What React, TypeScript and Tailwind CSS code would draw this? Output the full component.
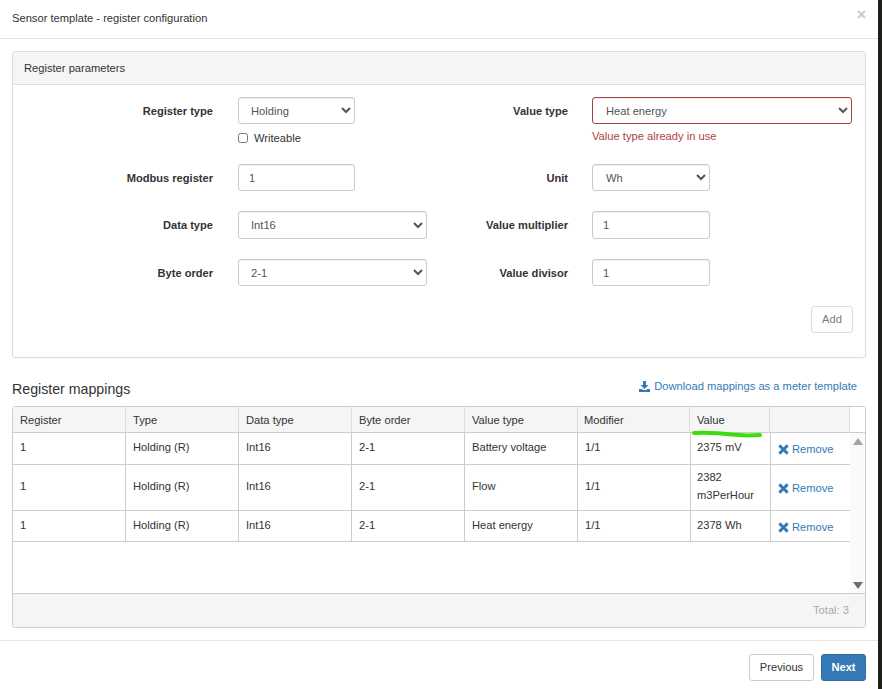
import React from "react";

const label = "flex items-center justify-end pr-[1px] text-right font-bold text-[#333] text-[11.1px] leading-[18px]";
const ctl = "block rounded-[3px] border bg-white pr-0 text-[11.17px] text-[#555] shadow-[inset_0_1px_1px_rgba(0,0,0,0.075)]";
const inputCls = "block rounded-[3px] border border-[#ccc] bg-white px-[10px] text-[11.17px] text-[#555] shadow-[inset_0_1px_1px_rgba(0,0,0,0.075)]";

function Sel({ v, w, tall, err, right }: { v: string; w: string; tall?: boolean; err?: boolean; right?: boolean }) {
  return (
    <select
      defaultValue={v}
      className={`${ctl} ${w} ${tall ? "h-[28px]" : "h-[27px]"} ${err ? "border-[#a94442]" : "border-[#ccc]"} ${right ? "pl-[9px]" : "pl-[8px]"}`}
    >
      <option>{v}</option>
    </select>
  );
}

function Inp({ v, w, tall }: { v: string; w: string; tall?: boolean }) {
  return <input readOnly value={v} className={`${inputCls} ${w} ${tall ? "h-[28px]" : "h-[27px]"}`} />;
}

const headCols = ["Register", "Type", "Data type", "Byte order", "Value type", "Modifier", "Value", ""];
const rows = [
  { vt: "Battery voltage", val: "2375 mV", h: "h-[32px]", pb: "pb-[4px]" },
  { vt: "Flow", val: "2382 m3PerHour", h: "h-[46px]", pb: "pb-[4px]" },
  { vt: "Heat energy", val: "2378 Wh", h: "h-[31px]", pb: "pb-[2px]" },
];

function XIcon() {
  return (
    <svg width="11" height="11" viewBox="0 0 10 10" className="shrink-0">
      <path d="M2.2 0.3 5 3.1 7.8 0.3 9.7 2.2 6.9 5 9.7 7.8 7.8 9.7 5 6.9 2.2 9.7 0.3 7.8 3.1 5 0.3 2.2Z" fill="#337ab7" />
    </svg>
  );
}

export default function App() {
  return (
    <div className="relative flex h-[689px] w-[882px] overflow-hidden bg-[#1f1f1a] font-['Liberation_Sans',Arial,sans-serif] text-[11.17px] text-[#333]">
      <div className="flex h-full w-[878px] flex-col bg-white">
        {/* header */}
        <div className="relative flex h-[39px] shrink-0 items-center border-b border-[#e5e5e5] pl-[12px] pb-[3px]">
          <span className="leading-[18px]">Sensor template - register configuration</span>
          <span className="absolute right-[12px] top-[6px] text-[16px] font-bold leading-[18px] text-[#c8c8c8]">×</span>
        </div>

        <div className="flex flex-1 flex-col px-[12px]">
          {/* panel */}
          <div className="mt-[12px] h-[307px] rounded-[3px] border border-[#ddd] shadow-[0_1px_1px_rgba(0,0,0,0.05)]">
            <div className="flex h-[33px] items-center border-b border-[#ddd] bg-[#f5f5f5] pl-[11px]">Register parameters</div>
            <div className="relative pt-[12px]">
              <div className="grid grid-cols-[200px_189px_118px_260px] gap-x-[24px] pl-[1px]">
                <div className={`${label} h-[27px]`}>Register type</div>
                <div>
                  <Sel v="Holding" w="w-[117px]" />
                  <label className="mt-[7px] flex h-[14px] items-center gap-[6px] text-[#333]">
                    <input type="checkbox" className="m-0 h-[10px] w-[10px]" />
                    Writeable
                  </label>
                </div>
                <div className={`${label} h-[27px]`}>Value type</div>
                <div className="-ml-[1px]">
                  <Sel v="Heat energy" w="w-[260px]" err right />
                  <div className="mt-[3px] leading-[18px] text-[#a94442]">Value type already in use</div>
                </div>

                <div className={`${label} mt-[19px] h-[27px]`}>Modbus register</div>
                <div className="mt-[19px]"><Inp v="1" w="w-[117px]" /></div>
                <div className={`${label} mt-[19px] h-[27px]`}>Unit</div>
                <div className="-ml-[1px] mt-[19px]"><Sel v="Wh" w="w-[118px]" right /></div>

                <div className={`${label} mt-[20px] h-[28px]`}>Data type</div>
                <div className="mt-[20px]"><Sel v="Int16" w="w-[189px]" tall /></div>
                <div className={`${label} mt-[20px] h-[28px]`}>Value multiplier</div>
                <div className="-ml-[1px] mt-[20px]"><Inp v="1" w="w-[118px]" tall /></div>

                <div className={`${label} mt-[20px] h-[27px]`}>Byte order</div>
                <div className="mt-[20px]"><Sel v="2-1" w="w-[189px]" /></div>
                <div className={`${label} mt-[20px] h-[27px]`}>Value divisor</div>
                <div className="-ml-[1px] mt-[20px]"><Inp v="1" w="w-[118px]" /></div>
              </div>
              <div className="mt-[20px] flex justify-end pr-[12px]">
                <button className="h-[27px] w-[42px] rounded-[3px] border border-[#ccc] bg-white text-[#333] opacity-65">Add</button>
              </div>
            </div>
          </div>

          {/* mappings title */}
          <div className="mt-[22px] flex h-[19px] items-center justify-between">
            <span className="text-[14.2px] leading-[19px] text-[#333]">Register mappings</span>
            <a className="mb-[6px] flex items-center gap-[4px] pr-[9px] text-[#337ab7]">
              <svg width="11" height="11" viewBox="0 0 11 11" className="-mt-[1px]">
                <path d="M4 0H7V4H9.5L5.5 8 1.5 4H4Z M0 9H11V11H0Z M0 8H2.8L4 9H0Z M8.2 8H11V9H7Z" fill="#337ab7" />
              </svg>
              Download mappings as a meter template
            </a>
          </div>

          {/* table */}
          <div className="mt-[7px] h-[222px] overflow-hidden rounded-[3px] border border-[#ccc]">
            <div className="grid h-[26px] grid-cols-[113px_113px_113px_113px_113px_112px_80px_80px_1fr] border-b border-[#ccc]">
              {headCols.map((c, i) => (
                <div key={i} className={`flex items-center border-r border-[#ddd] bg-[#f5f5f5] leading-[18px] ${i === 5 ? "pl-[6px]" : "pl-[7px]"}`}>
                  {c === "Value" ? <span className="mt-[1px]">{c}</span> : c}
                </div>
              ))}
              <div className="bg-white" />
            </div>
            <div className="relative flex h-[161px] border-b border-[#ccc]">
              <div className="w-[837px]">
                {rows.map((r, i) => (
                  <div key={i} className={`grid ${r.h} grid-cols-[113px_113px_113px_113px_113px_113px_80px_79px] border-b border-[#ccc]`}>
                    {["1", "Holding (R)", "Int16", "2-1", r.vt, "1/1"].map((c, j) => (
                      <div key={j} className={`flex items-center border-r border-[#ccc] ${r.pb} pl-[7px] leading-[18px]`}>
                        {c}
                      </div>
                    ))}
                    <div className={`flex items-center border-r border-[#ccc] ${r.pb} pl-[6px] pr-[6px] leading-[18px]`}>{r.val}</div>
                    <div className="flex items-center gap-[3px] pl-[7px] pt-[2px] text-[#337ab7]">
                      <XIcon />
                      Remove
                    </div>
                  </div>
                ))}
              </div>
              <div className="flex flex-1 flex-col items-center justify-between bg-[#fafafa] pt-[5px] pb-[4px]">
                <svg width="10" height="7" viewBox="0 0 10 7"><path d="M5 0 10 7H0Z" fill="#a3a3a3" /></svg>
                <svg width="10" height="7" viewBox="0 0 10 7"><path d="M0 0H10L5 7Z" fill="#6e6e6e" /></svg>
              </div>
            </div>
            <div className="flex h-[33px] items-center justify-end bg-[#f5f5f5] pr-[16px] text-[#aaa]">Total: 3</div>
          </div>
        </div>

        {/* footer */}
        <div className="flex h-[49px] shrink-0 items-start justify-end gap-[7px] border-t border-[#e5e5e5] pr-[12px] pt-[13px]">
          <button className="h-[27px] w-[65px] rounded-[3px] border border-[#ccc] bg-white text-[#333]">Previous</button>
          <button className="h-[27px] w-[45px] rounded-[3px] border border-[#2e6da4] bg-[#337ab7] font-bold text-white">Next</button>
        </div>
      </div>
      {/* hand-drawn green mark over the table */}
      <svg className="absolute left-[690px] top-[430px]" width="74" height="9" viewBox="0 0 74 9">
        <path d="M4 3C20 2.4 30 3 42 4.6 52 5.6 62 5.5 70 5" fill="none" stroke="#3ddc0f" strokeWidth="4" strokeLinecap="round" />
      </svg>
    </div>
  );
}
